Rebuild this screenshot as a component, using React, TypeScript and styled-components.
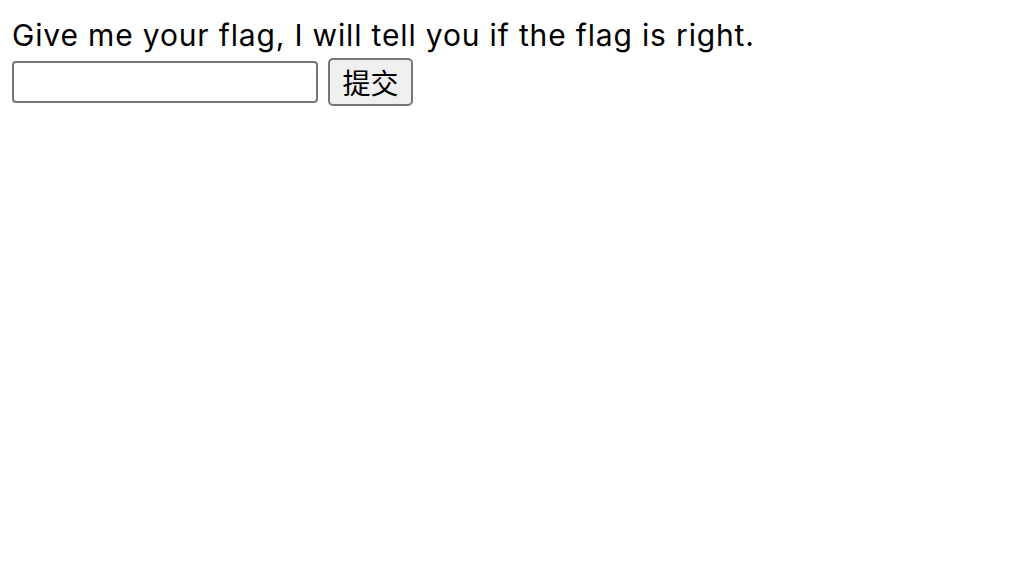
import React from "react";
import styled, { createGlobalStyle } from "styled-components";

const GlobalStyle = createGlobalStyle`
  html, body {
    margin: 0;
    padding: 0;
    background: #ffffff;
  }
  body {
    font-family: Inter, "Liberation Sans", "Noto Sans CJK SC", sans-serif;
    color: #000000;
  }
`;

const Page = styled.main`
  padding: 12px 12px 0 12px;
`;

const Prompt = styled.p`
  margin: 0;
  font-family: Inter, "Liberation Sans", sans-serif;
  font-size: 30px;
  letter-spacing: 0.84px;
  line-height: 46px;
  color: #000000;
  white-space: nowrap;
`;

const FlagForm = styled.form`
  display: flex;
  align-items: center;
  gap: 10px;
`;

const FlagInput = styled.input`
  box-sizing: border-box;
  width: 306px;
  height: 42px;
  margin: 0;
  padding: 2px 4px;
  border: 2px solid #767676;
  border-radius: 4px;
  background: #ffffff;
  font-size: 26px;
  outline: none;
`;

const SubmitButton = styled.button`
  box-sizing: border-box;
  width: 85px;
  height: 48px;
  margin: 0;
  padding: 0;
  border: 2px solid #767676;
  border-radius: 5px;
  background: #efefef;
  color: #000000;
  font-family: "Noto Sans CJK SC", sans-serif;
  font-size: 28px;
  line-height: 1;
  display: flex;
  align-items: center;
  justify-content: center;
`;

export default function App() {
  return (
    <>
      <GlobalStyle />
      <Page>
        <Prompt>Give me your flag, I will tell you if the flag is right.</Prompt>
        <FlagForm onSubmit={(e) => e.preventDefault()}>
          <FlagInput type="text" name="flag" />
          <SubmitButton type="submit">提交</SubmitButton>
        </FlagForm>
      </Page>
    </>
  );
}
